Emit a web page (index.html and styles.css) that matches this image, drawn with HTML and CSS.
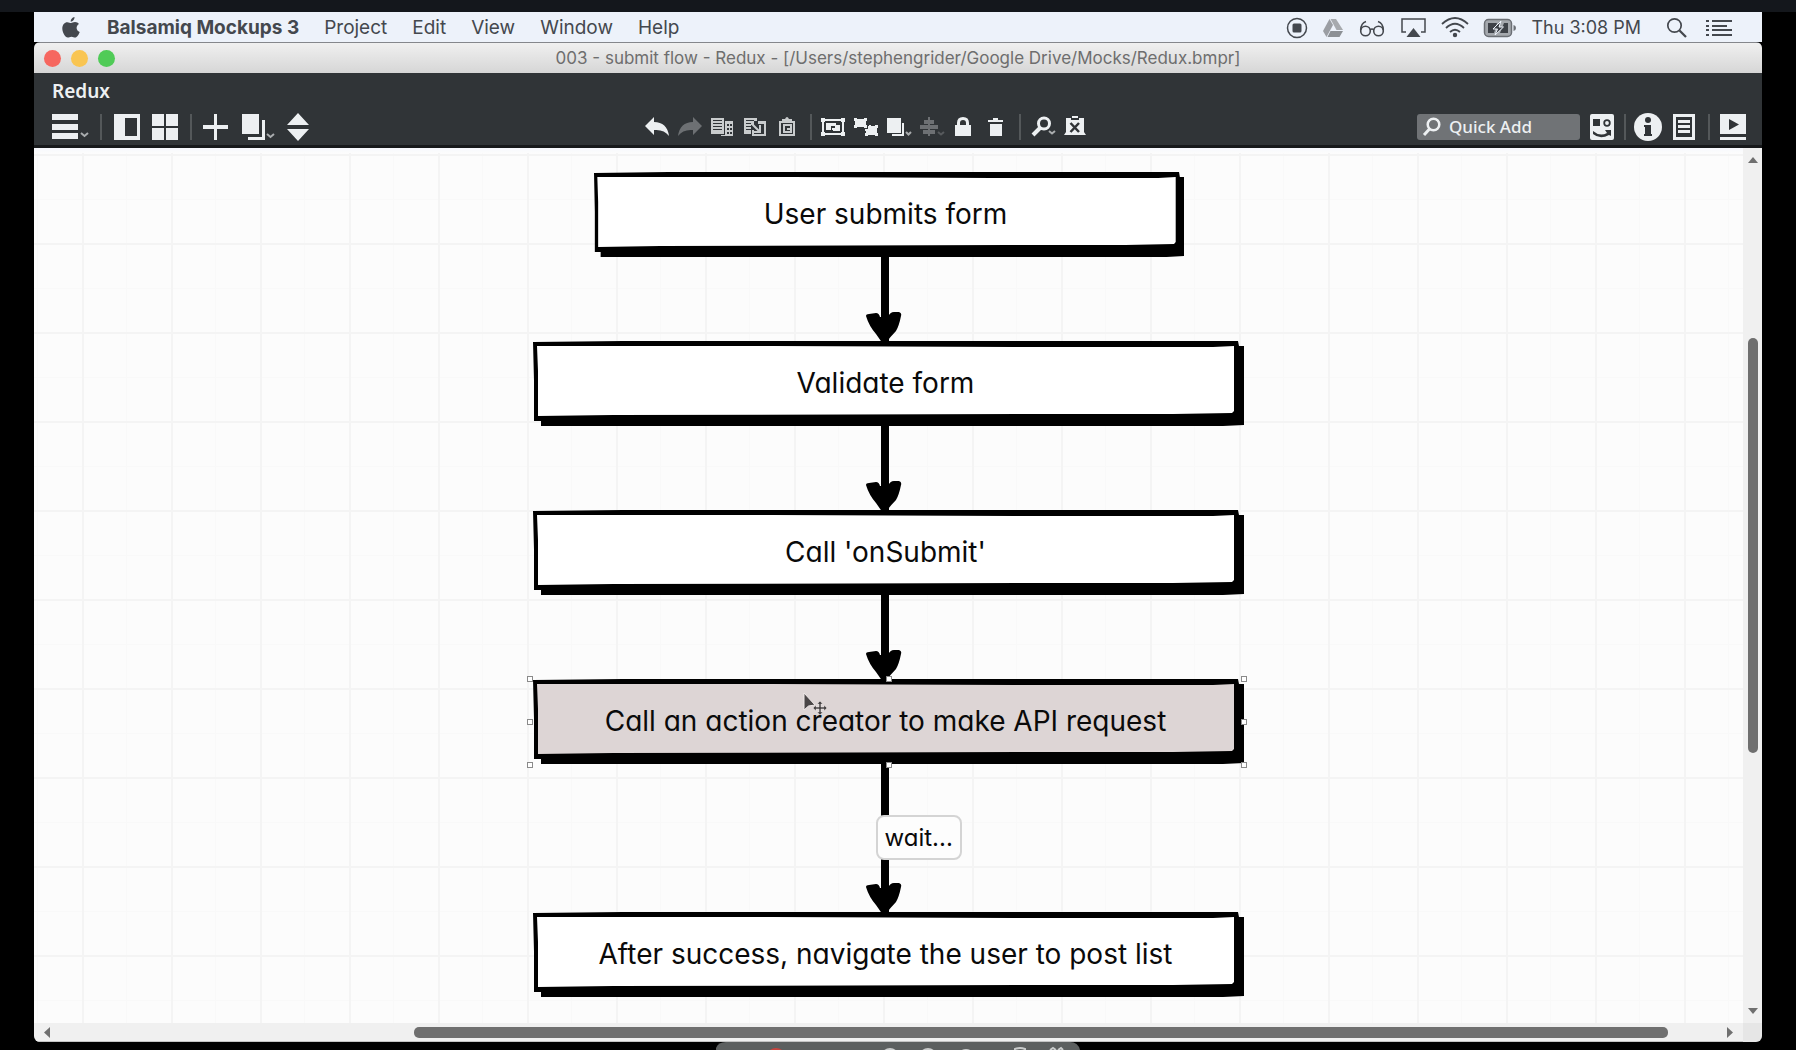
FILE: index.html
```html
<!DOCTYPE html>
<html lang="en">
<head>
<meta charset="utf-8">
<title>003 - submit flow - Redux</title>
<link rel="stylesheet" href="styles.css">
</head>
<body>
<svg class="defs" aria-hidden="true">
  <symbol id="sketch-box" viewBox="0 0 711 85" preserveAspectRatio="none">
    <path class="ink" d="M0 1L90 0H705L706 5H711V84L690 85H8V80H1L1 40Z"/>
    <path class="fill" d="M4 5L240 5L480 6L680 6L701 5V70L699 72L640 73L500 73L80 74L5 75L5 30Z"/>
  </symbol>
  <symbol id="arrow-head" viewBox="0 0 36 32">
    <path d="M0 4Q0 2 3 2L10 1Q13 1 14 5H22Q24 0 28 0L33 0Q36 1 35 4Q33 14 30 19Q25 24 19 32H17L10 22Q3 14 0 4Z"/>
  </symbol>
</svg>
<div class="strip"></div>
<div class="screen">
  <header class="menubar">
    <nav class="menus">
      <a href="#" class="apple" aria-label="Apple"><svg width="18" height="21" viewBox="0 0 18 21" fill="currentColor"><path d="M12.500 0C12.700 2.500 10.800 4.700 8.700 4.700C8.400 2.500 10.300.4 12.500 0ZM9 6C10 6 11 5 13 5C14.700 5 16.200 5.800 17 7C13.500 9 14 13.500 17.700 15C16.800 17.800 14.900 20.500 13.200 20.500C11.800 20.500 11.200 19.700 9.500 19.700C7.700 19.700 7 20.500 5.800 20.500C3.300 20.500.3 15.500.3 11.500C.3 7.500 2.700 5.200 5.300 5.200C7 5.200 8 6 9 6Z"/></svg></a>
      <a href="#" class="app">Balsamiq Mockups 3</a>
      <a href="#">Project</a>
      <a href="#">Edit</a>
      <a href="#">View</a>
      <a href="#">Window</a>
      <a href="#">Help</a>
    </nav>
    <div class="status">
      <svg width="22" height="22" viewBox="0 0 22 22"><circle cx="11" cy="11" r="9.500" fill="none" stroke="currentColor" stroke-width="1.500"/><rect x="6.500" y="6.500" width="9" height="9" rx="1.500" fill="currentColor"/></svg>
      <svg width="22" height="20" viewBox="0 0 22 20"><path d="M7.500 1L11 7L4.500 19L1 13Z" fill="#9b9ea3"/><path d="M8.500 1H14L21 12H14.500Z" fill="#a7aaae"/><path d="M8.500 13H21L17.500 19H5.500Z" fill="#8c9095"/></svg>
      <svg width="28" height="20" viewBox="0 0 28 20" fill="none" stroke="currentColor" stroke-width="1.600"><circle cx="7.500" cy="13" r="4.800"/><circle cx="20.500" cy="13" r="4.800"/><path d="M12 12Q14 10 16 12M2.700 12Q3 5 8 3.500M25.300 12Q25 5 20 3.500"/></svg>
      <svg width="27" height="22" viewBox="0 0 27 22"><path d="M6 15H2V2H25V15H21" fill="none" stroke="currentColor" stroke-width="1.500"/><path d="M13.500 11L20.500 20H6.500Z" fill="currentColor"/></svg>
      <svg width="28" height="21" viewBox="0 0 28 21" fill="none" stroke="currentColor" stroke-width="1.800"><path d="M1 7Q14-5 27 7M5 11Q14 2.500 23 11M9 15Q14 10.500 19 15"/><circle cx="14" cy="18" r="1.300" fill="currentColor"/></svg>
      <svg width="34" height="20" viewBox="0 0 34 20"><rect x="1.500" y="1.500" width="27" height="17" rx="4" fill="#a4a8ad" stroke="#6b6f75" stroke-width="1.500"/><path d="M5 5H14L11 15H5ZM25 15H17L21 5H25Z" fill="#3e4248"/><path d="M18 3L10 11H14.500L12 17L20.500 9H16Z" fill="#3e4248" stroke="#edf2fa"/><path d="M30.500 7Q33 7.500 33 10Q33 12.500 30.500 13Z" fill="#6b6f75"/></svg>
      <time class="clock">Thu 3:08 PM</time>
      <svg width="22" height="22" viewBox="0 0 22 22" fill="none" stroke="currentColor" stroke-width="1.700"><circle cx="8.500" cy="8.500" r="6.700"/><path d="M13.500 13.500L20 20" stroke-width="2.300"/></svg>
      <svg class="list" width="26" height="18" viewBox="0 0 26 18" fill="currentColor"><path d="M0 1H3V3H0ZM0 6H3V8H0ZM0 10H3V12H0ZM0 15H3V17H0ZM6 1H26V3H6ZM6 6H21V8H6ZM6 10H26V12H6ZM6 15H26V17H6Z"/></svg>
    </div>
  </header>

  <main class="window">
    <div class="titlebar">
      <div class="lights"><button class="close" aria-label="Close"></button><button class="min" aria-label="Minimize"></button><button class="max" aria-label="Zoom"></button></div>
      <h1>003 - submit flow - Redux - [/Users/stephengrider/Google Drive/Mocks/Redux.bmpr]</h1>
    </div>

    <div class="toolbar">
      <div class="project">Redux</div>
      <div class="tools">
        <div class="group left">
          <button aria-label="Menu"><svg width="36" height="26" viewBox="0 0 36 26"><path d="M0 0H26V6H0ZM0 10H26V16H0ZM0 19H26V25H0Z"/><path class="chev" d="M29 19L32.500 22L36 19"/></svg></button>
          <i class="sep"></i>
          <button aria-label="Toggle navigator"><svg width="26" height="26" viewBox="0 0 26 26"><path fill-rule="evenodd" d="M0 0H26V26H0ZM11 4V22H23V4Z"/></svg></button>
          <button aria-label="Thumbnails"><svg width="26" height="26" viewBox="0 0 26 26"><path d="M0 0H12V12H0ZM14 0H26V12H14ZM0 14H12V26H0ZM14 14H26V26H14Z"/></svg></button>
          <i class="sep"></i>
          <button aria-label="New mockup"><svg width="26" height="26" viewBox="0 0 26 26"><path d="M10 0H13V11H24V15H13V26H10V15H-1V11H10Z"/></svg></button>
          <button aria-label="Duplicate"><svg width="32" height="26" viewBox="0 0 32 26"><path d="M0 0H17V20H0ZM20 6H23V26H6V23H20Z"/><path class="chev" d="M25 20L28.500 23L32 20"/></svg></button>
          <button aria-label="Previous or next"><svg width="22" height="28" viewBox="0 0 22 28"><path d="M12 0L23 12H1ZM12 28L23 16H1Z"/></svg></button>
        </div>

        <div class="group center">
          <button aria-label="Undo"><svg width="24" height="22" viewBox="0 0 24 22"><path d="M0 10L9 1V6Q22 6 24 20Q19 13 9 14V19Z"/></svg></button>
          <button aria-label="Redo" disabled><svg width="24" height="22" viewBox="0 0 24 22"><path d="M24 10L15 1V6Q2 6 0 20Q5 13 15 14V19Z"/></svg></button>
          <button aria-label="Copy"><svg width="24" height="22" viewBox="0 0 24 22"><path class="soft" fill-rule="evenodd" d="M0 2H13V18H0ZM2 4V5H11V4ZM2 7V8H11V7ZM2 10V11H11V10ZM2 13V14H11V13Z"/><path class="soft" fill-rule="evenodd" d="M14 5H22V20H10V19H14ZM16 8V10H18V8ZM16 12V14H18V12ZM16 16V18H18V16ZM19 8V10H21V8ZM19 12V14H21V12ZM19 16V18H21V16Z"/></svg></button>
          <button aria-label="Paste"><svg width="24" height="22" viewBox="0 0 24 22"><path class="soft" fill-rule="evenodd" d="M0 2H13V5H10V9H7V18H0ZM2 4V5H10V4ZM2 7V8H7V7ZM2 10V11H7V10ZM2 13V14H7V13Z"/><path class="soft" fill-rule="evenodd" d="M14 5H22V20H8V14H10V18H20V8H14Z"/><path d="M8 8L15 15M16 9V16H9" fill="none" stroke="#c9cccd" stroke-width="2"/></svg></button>
          <button aria-label="Clipboard"><svg width="24" height="22" viewBox="0 0 24 22"><path class="soft" fill-rule="evenodd" d="M2 5H5V3H8Q10-1 12 3H15V5H18V20H2ZM4 7V18H16V7Z"/><path class="soft" fill-rule="evenodd" d="M6 8H15V17H6ZM8 10V15H13V14H10V12H13V10Z"/></svg></button>
          <i class="sep"></i>
          <button aria-label="Group"><svg width="24" height="22" viewBox="0 0 24 22"><path fill-rule="evenodd" d="M0 2H4V3H20V2H24V6H23V16H24V20H20V19H4V20H0V16H1V6H0ZM3 6V16H4V17H20V16H21V6H20V5H4V6Z"/><path d="M5 7H15V9H19V15H12V14H5Z"/><path d="M10 10H14V12H11V14H10Z" fill="#303437"/></svg></button>
          <button aria-label="Ungroup"><svg width="24" height="22" viewBox="0 0 24 22"><path d="M0 2H3V3H10V2H13V5H12V9H13V12H10V11H3V12H0V9H1V5H0ZM11 13H14V10H15V9H17V10H21V9H24V12H23V17H24V20H21V19H14V20H11V17H12V15H11Z"/></svg></button>
          <button aria-label="Arrange"><svg width="24" height="22" viewBox="0 0 24 22"><path d="M0 2H14V17H0ZM15 7H17V20H5V18H15Z"/><path class="chev" d="M19 16L21.500 18.500L24 16"/></svg></button>
          <button aria-label="Align" disabled><svg width="24" height="22" viewBox="0 0 24 22"><path d="M8 1H10V4H14V8H10V9H18V13H10V14H15V18H10V20H8V18H3V14H8V13H0V9H8V8H4V4H8Z"/><path class="chev" d="M18 16L21 18.500L24 16"/></svg></button>
          <button aria-label="Lock"><svg width="24" height="22" viewBox="0 0 24 22"><path fill-rule="evenodd" d="M2 9H4V7Q4 1 10 1Q16 1 16 7V9H18V20H2ZM7 9H13V7Q13 4 10 4Q7 4 7 7Z"/></svg></button>
          <button aria-label="Delete"><svg width="24" height="22" viewBox="0 0 24 22"><path d="M2 4H7V2H12V4H17V6H2ZM4 8H16V20H4Z"/></svg></button>
          <i class="sep"></i>
          <button aria-label="Zoom"><svg width="24" height="22" viewBox="0 0 24 22"><circle cx="14" cy="7.500" r="5.500" fill="none" stroke="#edf0f2" stroke-width="3"/><path d="M3 19L10 12" stroke="#edf0f2" stroke-width="4"/><path class="chev" d="M19 15L22 17.500L25 15"/></svg></button>
          <button aria-label="Markup"><svg width="24" height="22" viewBox="0 0 24 22"><path d="M3 2H8V4H16V2H21V16L23 19H1L3 16Z"/><path d="M9 0H15V2H9Z"/><path d="M7.500 7L16 16M16 7L7.500 16" stroke="#303437" stroke-width="2.500"/></svg></button>
        </div>

        <div class="group right">
          <label class="quick"><svg width="18" height="20" viewBox="0 0 18 20"><circle cx="10.500" cy="7.500" r="5.800" fill="none" stroke="#edf0f2" stroke-width="2.500"/><path d="M1 18L6.500 12" stroke="#edf0f2" stroke-width="3"/></svg><input type="text" placeholder="Quick Add" aria-label="Quick Add"></label>
          <button aria-label="UI library"><svg width="24" height="26" viewBox="0 0 24 26"><rect width="24" height="26" rx="2"/><path d="M3 5H10V12H3Z" fill="#303437"/><circle cx="17" cy="9" r="2.800" fill="none" stroke="#303437" stroke-width="1.800"/><path d="M3 17Q10 23 17 19L15 16H21V22L19 21Q10 26 3 20Z" fill="#303437"/></svg></button>
          <i class="sep"></i>
          <button aria-label="Properties"><svg width="28" height="28" viewBox="0 0 28 28"><circle cx="12" cy="14" r="14"/><circle cx="12" cy="7" r="3" fill="#303437"/><path d="M8 12H15V21H16V23H8V21H9V14H8Z" fill="#303437"/></svg></button>
          <button aria-label="Notes"><svg width="24" height="26" viewBox="0 0 24 26"><path fill-rule="evenodd" d="M-1 0H21V26H-1ZM2 3V23H18V3ZM4 6H16V9H4ZM4 11H16V14H4ZM4 16H16V19H4Z"/></svg></button>
          <i class="sep"></i>
          <button aria-label="Present"><svg width="26" height="26" viewBox="0 0 26 26"><path fill-rule="evenodd" d="M0 0H26V20H0ZM9 5V16L19 10.500ZM0 23H26V26H0Z"/></svg></button>
        </div>
      </div>
    </div>

    <section class="workspace">
      <div class="canvas">
        <div class="node short"><svg class="shape"><use href="#sketch-box"/></svg><span>User submits form</span></div>
        <div class="arrow"><svg class="head"><use href="#arrow-head"/></svg></div>
        <div class="node"><svg class="shape"><use href="#sketch-box"/></svg><span>Validate form</span></div>
        <div class="arrow"><svg class="head"><use href="#arrow-head"/></svg></div>
        <div class="node"><svg class="shape"><use href="#sketch-box"/></svg><span>Call 'onSubmit'</span></div>
        <div class="arrow"><svg class="head"><use href="#arrow-head"/></svg></div>
        <div class="node selected"><svg class="shape"><use href="#sketch-box"/></svg><span>Call an action creator to make API request</span>
          <b class="handle n w"></b><b class="handle n c"></b><b class="handle n e"></b><b class="handle m w"></b><b class="handle m e"></b><b class="handle s w"></b><b class="handle s c"></b><b class="handle s e"></b>
          <svg class="cursor" width="26" height="26" viewBox="0 0 26 26"><path d="M1 1V18L5.500 14L12 13Z" fill="#4a4647" stroke="#eee8e8"/><path d="M17 9L20 12H18V15H21V13L24 16L21 19V17H18V20H20L17 23L14 20H16V17H13V19L10 16L13 13V15H16V12H14Z" fill="#4a4647" stroke="#eee8e8" stroke-width=".5"/></svg>
        </div>
        <div class="arrow long"><svg class="head"><use href="#arrow-head"/></svg><span class="tag">wait...</span></div>
        <div class="node"><svg class="shape"><use href="#sketch-box"/></svg><span>After success, navigate the user to post list</span></div>
      </div>
      <div class="vbar"><svg width="10" height="6"><path d="M0 6L5 0L10 6Z"/></svg><div class="track"><div class="thumb"></div></div><svg width="10" height="6"><path d="M0 0L5 6L10 0Z"/></svg></div>
      <div class="hbar"><svg width="6" height="11"><path d="M6 0V11L0 5.500Z"/></svg><div class="track"><div class="thumb"></div></div><svg width="6" height="11"><path d="M0 0V11L6 5.500Z"/></svg></div>
      <div class="corner"></div>
    </section>
  </main>
</div>
<footer class="dock">
  <svg width="364" height="8" viewBox="0 0 364 8"><path d="M0 8V6Q2 0 10 0H354Q362 0 364 8Z" fill="#5c5f5f"/><circle cx="60" cy="16" r="10" fill="#c8453f"/><g fill="none" stroke="#c9cbcb" stroke-width="2"><circle cx="174" cy="15" r="8"/><circle cx="212" cy="15" r="8"/><circle cx="250" cy="16" r="8"/><path d="M299 8V7Q304 5 309 7V8M334 8L337 6L340 8M342 8L345 6L347 8"/></g></svg>
</footer>
</body>
</html>
```
FILE: styles.css
```css
* { box-sizing: border-box; }

html, body { height: 100%; margin: 0; }

body {
  display: flex;
  flex-direction: column;
  background: #000;
  font-family: Inter, "Liberation Sans", sans-serif;
  overflow: hidden;
}

svg { display: block; flex: none; }
.defs { position: absolute; width: 0; height: 0; }

.strip { height: 12px; flex: none; background: #14171c; }

.screen {
  flex: 1;
  display: flex;
  flex-direction: column;
  min-height: 0;
  margin: 0 34px;
}

/* system menu bar */
.menubar {
  display: flex;
  justify-content: space-between;
  align-items: center;
  height: 30px;
  padding: 1px 30px 0 28px;
  background: #edf2fa;
  color: #44484e;
}
.menus { display: flex; align-items: center; gap: 25px; }
.menus a { color: inherit; text-decoration: none; font-size: 19px; line-height: 29px; }
.menus .apple { margin-right: 2px; }
.menus .app { font-weight: 700; }
.status { display: flex; align-items: center; gap: 14px; }
.clock { font-size: 18px; line-height: 29px; margin-right: 11px; }
.list { margin-left: 4px; }

/* application window */
.window {
  flex: 1;
  display: flex;
  flex-direction: column;
  min-height: 0;
  border-radius: 6px;
  overflow: hidden;
  background: #303437;
}
.titlebar {
  display: grid;
  grid-template-columns: 80px 1fr 80px;
  align-items: center;
  height: 31px;
  padding: 0 10px;
  background: linear-gradient(#f0f0f0, #d6d6d6);
  border-top: 1px solid #85878c;
}
.titlebar h1 {
  margin: 0;
  font-size: 17px;
  line-height: 30px;
  font-weight: 400;
  color: #6e6e6e;
  text-align: center;
  white-space: nowrap;
}
.lights { display: flex; gap: 10px; }
.lights button { width: 17px; height: 17px; padding: 0; border: 0; border-radius: 50%; }
.close { background: #f6675f; }
.min { background: #f9c552; }
.max { background: #50cb57; }

.toolbar {
  padding: 0 16px 0 18px;
  background: #303437;
  border-bottom: 3px solid #17191b;
  color: #edf0f2;
  font-family: "Noto Sans", sans-serif;
}
.project { font-size: 19px; line-height: 36px; font-weight: 600; }
.tools { display: flex; justify-content: space-between; align-items: center; height: 36px; }
.group { display: flex; align-items: center; }
.left { gap: 12px; }
.center { gap: 9px; padding-left: 6px; }
.right { gap: 10px; }
.group button { padding: 0; border: 0; background: none; }
.group svg { fill: #edf0f2; overflow: visible; }
.group .soft { fill: #c9cccd; }
.group .chev { fill: none; stroke: #a9acae; stroke-width: 2; }
.group button:disabled { opacity: .32; }
.sep { width: 2px; height: 26px; background: #54585a; }
.quick {
  display: flex;
  align-items: center;
  gap: 8px;
  width: 163px;
  height: 26px;
  padding-left: 6px;
  border-radius: 3px;
  background: #707376;
}
.quick input {
  flex: 1;
  min-width: 0;
  height: 26px;
  padding: 0 0 2px;
  border: 0;
  background: none;
  font: 500 17px/24px "Noto Sans", sans-serif;
  color: #edf0f2;
}
.quick input::placeholder { color: #edf0f2; opacity: 1; }

/* drawing area */
.workspace {
  flex: 1;
  min-height: 0;
  display: grid;
  grid-template: 1fr 19px / 1fr 19px;
}
.canvas {
  display: flex;
  flex-direction: column;
  align-items: center;
  padding-top: 24px;
  overflow: hidden;
  background:
    linear-gradient(#f6f8fd, #fcfcfc) 0 0 / 100% 5px no-repeat,
    linear-gradient(90deg, #f4f4f4 2px, transparent 2px) 48px 0 / 89px 89px,
    linear-gradient(#f4f4f4 2px, transparent 2px) 0 95px / 89px 89px,
    linear-gradient(90deg, #f9f9f9 1px, transparent 1px) 3px 0 / 89px 89px,
    linear-gradient(#f9f9f9 1px, transparent 1px) 0 51px / 89px 89px,
    #fcfcfc;
  font-size: 28px;
  font-feature-settings: "cv11";
  color: #0a0a0a;
}
.node {
  position: relative;
  flex: none;
  display: flex;
  justify-content: center;
  align-items: center;
  width: 711px;
  height: 85px;
  padding: 0 6px 2px 0;
}
.short { width: 590px; }
.node span { position: relative; line-height: 34px; white-space: nowrap; }
.shape { position: absolute; inset: 0; width: 100%; height: 100%; }
.ink { fill: #000; }
.fill { fill: var(--paper, #fff); }
.selected { --paper: #ddd5d5; }

.arrow {
  position: relative;
  flex: none;
  width: 8px;
  height: 84px;
  margin-right: 8px;
  background: #000;
}
.long { height: 148px; }
.head { position: absolute; left: -15px; bottom: -3px; width: 36px; height: 32px; z-index: 1; }
.tag {
  position: absolute;
  top: 51px;
  left: -5px;
  padding: 0 7px;
  border: 2px solid #d4d4d4;
  border-radius: 8px;
  background: #fdfdfd;
  font-size: 24px;
  line-height: 41px;
}
.handle { position: absolute; width: 6px; height: 6px; border: 1px solid #8a8a8a; background: #fff; z-index: 2; }
.n { top: -3px; }
.m { top: 40px; }
.s { bottom: -4px; }
.w { left: -6px; }
.c { left: 353px; }
.e { right: -3px; }
.cursor { position: absolute; left: 270px; top: 13px; }

/* scroll bars */
.vbar, .hbar { display: flex; align-items: center; background: #f0f0f0; }
.vbar { flex-direction: column; padding: 9px 0; }
.hbar { padding: 0 10px; border-bottom: 1px solid #c4c4c4; }
.vbar svg, .hbar svg { fill: #6f6f6f; }
.track { flex: 1; display: flex; }
.vbar .track { flex-direction: column; padding: 175px 0 0; }
.hbar .track { padding: 0 0 0 364px; }
.thumb { border-radius: 5px; background: #6f6f6f; }
.vbar .thumb { width: 10px; flex: 0 0 62%; }
.hbar .thumb { height: 11px; flex: 0 0 95.500%; }
.corner { background: #e6e6e6; }

.dock { display: flex; justify-content: center; height: 8px; flex: none; }
```
